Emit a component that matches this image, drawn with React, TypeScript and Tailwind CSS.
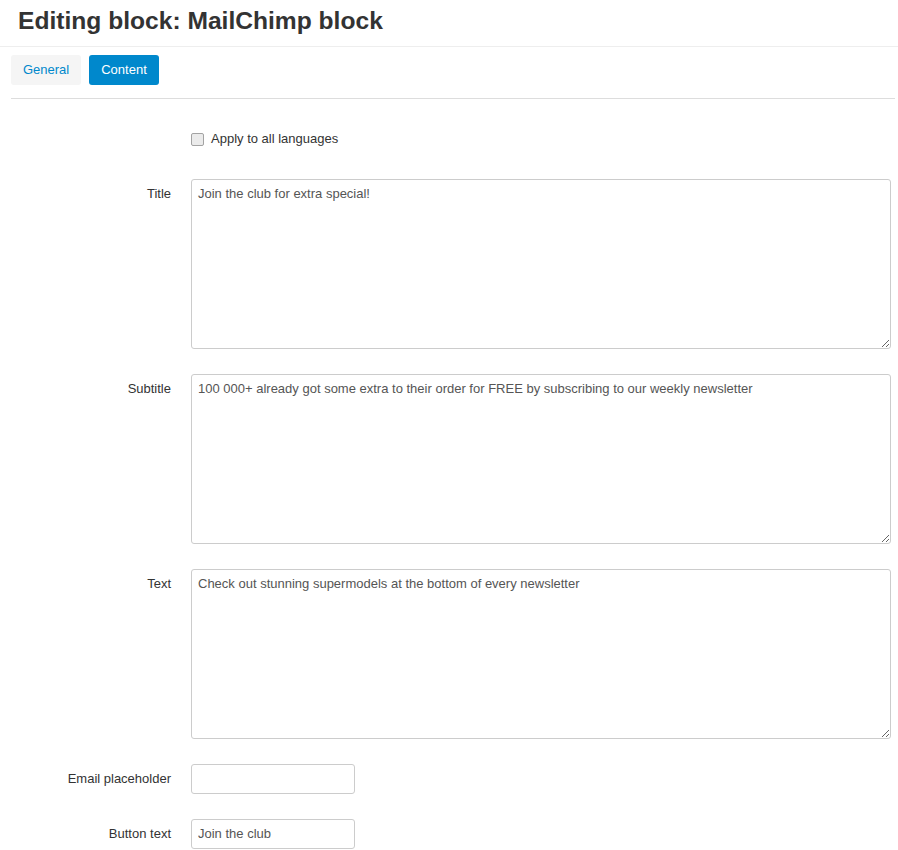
import React from "react";

const font = { fontFamily: '"Liberation Sans", Arial, sans-serif' };

function Row({ label, children }: { label: string; children: React.ReactNode }) {
  return (
    <div className="flex items-start gap-[20px]">
      <div className="w-[171px] shrink-0 text-right pt-[7px] text-[13px] leading-[16px] text-[#333]">{label}</div>
      {children}
    </div>
  );
}

function Area({ value }: { value: string }) {
  return (
    <textarea
      defaultValue={value}
      className="block w-[700px] h-[170px] border border-[#ccc] rounded-[3px] px-[6px] pt-[6px] text-[13px] leading-[16px] text-[#555] bg-white outline-none resize-y"
      style={font}
    />
  );
}

function Input({ value }: { value: string }) {
  return (
    <input
      defaultValue={value}
      className="block w-[164px] h-[30px] border border-[#ccc] rounded-[3px] px-[6px] pb-[2px] text-[13px] text-[#555] bg-white outline-none"
      style={font}
    />
  );
}

export default function App() {
  return (
    <div className="w-[898px] h-[850px] bg-white overflow-hidden text-[#333]" style={font}>
      <div className="h-[47px] border-b border-[#eee] pl-[18px] pt-[6px]">
        <h1 className="text-[24.6px] leading-[30px] font-bold text-[#333]">Editing block: MailChimp block</h1>
      </div>
      <div className="ml-[11px] mr-[3px] pt-[8px] pb-[13px] border-b border-[#ddd] flex gap-[8px]">
        <button className="h-[30px] w-[70px] rounded-[3px] bg-[#f5f5f5] text-[#0088cc] text-[13px]">General</button>
        <button className="h-[30px] w-[70px] rounded-[3px] bg-[#0088cc] text-white text-[13px]">Content</button>
      </div>
      <div className="pt-[33px] flex flex-col">
        <div className="flex items-center h-[14px] ml-[191px] gap-[7px]">
          <input type="checkbox" className="appearance-none w-[13px] h-[13px] m-0 border border-[#a3a3a3] bg-[#ebebeb] rounded-[2px]" />
          <span className="text-[13px] leading-[16px] text-[#333]">Apply to all languages</span>
        </div>
        <div className="mt-[33px] flex flex-col gap-[25px]">
          <Row label="Title">
            <Area value="Join the club for extra special!" />
          </Row>
          <Row label="Subtitle">
            <Area value="100 000+ already got some extra to their order for FREE by subscribing to our weekly newsletter" />
          </Row>
          <Row label="Text">
            <Area value="Check out stunning supermodels at the bottom of every newsletter" />
          </Row>
          <Row label="Email placeholder">
            <Input value="" />
          </Row>
          <Row label="Button text">
            <Input value="Join the club" />
          </Row>
        </div>
      </div>
    </div>
  );
}
